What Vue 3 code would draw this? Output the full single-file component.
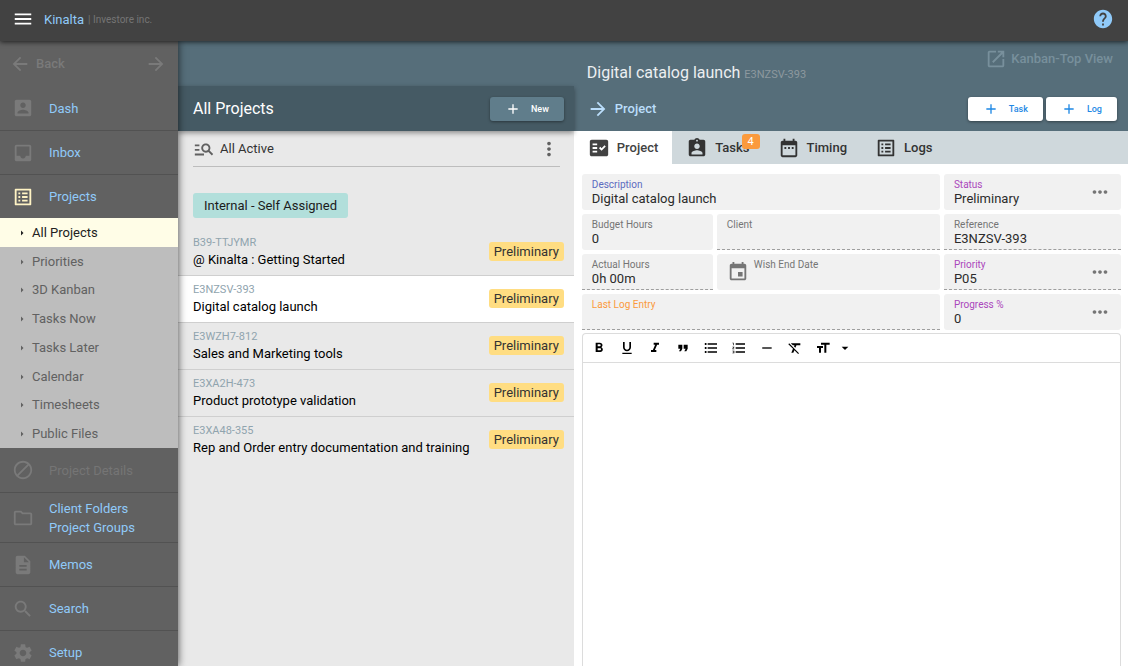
<script setup>
import { ref } from 'vue'

const icons = {
  menu: 'M3 18h18v-2H3v2zm0-5h18v-2H3v2zm0-7v2h18V6H3z',
  back: 'M20 11H7.83l5.59-5.59L12 4l-8 8 8 8 1.41-1.41L7.83 13H20v-2z',
  forward: 'M12 4l-1.41 1.41L16.17 11H4v2h12.17l-5.58 5.59L12 20l8-8z',
  dash: 'M3 5v14c0 1.1.89 2 2 2h14c1.1 0 2-.9 2-2V5c0-1.1-.9-2-2-2H5c-1.11 0-2 .9-2 2zm12 4c0 1.66-1.34 3-3 3s-3-1.34-3-3 1.34-3 3-3 3 1.34 3 3zm-9 8c0-2 4-3.1 6-3.1s6 1.1 6 3.1v1H6v-1z',
  inbox: 'M19 3H4.99c-1.11 0-1.98.89-1.98 2L3 19c0 1.1.88 2 1.99 2H19c1.1 0 2-.9 2-2V5c0-1.11-.9-2-2-2zm0 12h-4c0 1.66-1.35 3-3 3s-3-1.34-3-3H4.99V5H19v10z',
  list: 'M19 5v14H5V5h14m1.1-2H3.9c-.5 0-.9.4-.9.9v16.2c0 .4.4.9.9.9h16.2c.4 0 .9-.5.9-.9V3.9c0-.5-.5-.9-.9-.9zM11 7h6v2h-6V7zm0 4h6v2h-6v-2zm0 4h6v2h-6zM7 7h2v2H7zm0 4h2v2H7zm0 4h2v2H7z',
  block: 'M12 2C6.48 2 2 6.48 2 12s4.48 10 10 10 10-4.48 10-10S17.52 2 12 2zM4 12c0-4.42 3.58-8 8-8 1.85 0 3.55.63 4.9 1.69L5.69 16.9C4.63 15.55 4 13.85 4 12zm8 8c-1.85 0-3.55-.63-4.9-1.69L18.31 7.1C19.37 8.45 20 10.15 20 12c0 4.42-3.58 8-8 8z',
  folder: 'M9.17 6l2 2H20v10H4V6h5.17M10 4H4c-1.1 0-1.99.9-1.99 2L2 18c0 1.1.9 2 2 2h16c1.1 0 2-.9 2-2V8c0-1.1-.9-2-2-2h-8l-2-2z',
  memo: 'M14 2H6c-1.1 0-1.99.9-1.99 2L4 20c0 1.1.89 2 1.99 2H18c1.1 0 2-.9 2-2V8l-6-6zm2 16H8v-2h8v2zm0-4H8v-2h8v2zm-3-5V3.5L18.5 9H13z',
  search: 'M15.5 14h-.79l-.28-.27C15.41 12.59 16 11.11 16 9.5 16 5.91 13.09 3 9.5 3S3 5.91 3 9.5 5.91 16 9.5 16c1.61 0 3.09-.59 4.23-1.57l.27.28v.79l5 4.99L20.49 19l-4.99-5zm-6 0C7.01 14 5 11.99 5 9.5S7.01 5 9.5 5 14 7.01 14 9.5 11.99 14 9.5 14z',
  settings: 'M19.14 12.94c.04-.3.06-.61.06-.94 0-.32-.02-.64-.07-.94l2.03-1.58c.18-.14.23-.41.12-.61l-1.92-3.32c-.12-.22-.37-.29-.59-.22l-2.39.96c-.5-.38-1.03-.7-1.62-.94l-.36-2.54c-.04-.24-.24-.41-.48-.41h-3.84c-.24 0-.43.17-.47.41l-.36 2.54c-.59.24-1.13.57-1.62.94l-2.39-.96c-.22-.08-.47 0-.59.22L2.74 8.87c-.12.21-.08.47.12.61l2.03 1.58c-.05.3-.09.63-.09.94s.02.64.07.94l-2.03 1.58c-.18.14-.23.41-.12.61l1.92 3.32c.12.22.37.29.59.22l2.39-.96c.5.38 1.03.7 1.62.94l.36 2.54c.05.24.24.41.48.41h3.84c.24 0 .44-.17.47-.41l.36-2.54c.59-.24 1.13-.56 1.62-.94l2.39.96c.22.08.47 0 .59-.22l1.92-3.32c.12-.22.07-.47-.12-.61l-2.01-1.58zM12 15.6c-1.98 0-3.6-1.62-3.6-3.6s1.62-3.6 3.6-3.6 3.6 1.62 3.6 3.6-1.62 3.6-3.6 3.6z',
  help: 'M12 2C6.48 2 2 6.48 2 12s4.48 10 10 10 10-4.48 10-10S17.52 2 12 2zm1 17h-2v-2h2v2zm2.07-7.75l-.9.92C13.45 12.9 13 13.5 13 15h-2v-.5c0-1.1.45-2.1 1.17-2.83l1.24-1.26c.37-.36.59-.86.59-1.41 0-1.1-.9-2-2-2s-2 .9-2 2H8c0-2.21 1.79-4 4-4s4 1.79 4 4c0 .88-.36 1.68-.93 2.25z',
  open: 'M19 19H5V5h7V3H5c-1.11 0-2 .9-2 2v14c0 1.1.89 2 2 2h14c1.1 0 2-.9 2-2v-7h-2v7zM14 3v2h3.59l-9.83 9.83 1.41 1.41L19 6.41V10h2V3h-7z',
  add: 'M19 13h-6v6h-2v-6H5v-2h6V5h2v6h6v2z',
  filter: 'M7 9H2V7h5v2zm0 3H2v2h5v-2zm13.59 7l-3.83-3.83c-.8.52-1.74.83-2.76.83-2.76 0-5-2.24-5-5s2.24-5 5-5 5 2.24 5 5c0 1.02-.31 1.96-.83 2.75L22 17.59 20.59 19zM17 11c0-1.65-1.35-3-3-3s-3 1.35-3 3 1.35 3 3 3 3-1.35 3-3zM2 19h10v-2H2v2z',
  moreVert: 'M12 8c1.1 0 2-.9 2-2s-.9-2-2-2-2 .9-2 2 .9 2 2 2zm0 2c-1.1 0-2 .9-2 2s.9 2 2 2 2-.9 2-2-.9-2-2-2zm0 6c-1.1 0-2 .9-2 2s.9 2 2 2 2-.9 2-2-.9-2-2-2z',
  more: 'M6 10c-1.1 0-2 .9-2 2s.9 2 2 2 2-.9 2-2-.9-2-2-2zm12 0c-1.1 0-2 .9-2 2s.9 2 2 2 2-.9 2-2-.9-2-2-2zm-6 0c-1.1 0-2 .9-2 2s.9 2 2 2 2-.9 2-2-.9-2-2-2z',
  check: 'M20 3H4c-1.1 0-2 .9-2 2v14c0 1.1.9 2 2 2h16c1.1 0 2-.9 2-2V5c0-1.1-.9-2-2-2zM10 17H5v-2h5v2zm0-4H5v-2h5v2zm0-4H5V7h5v2zm4.82 6L12 12.16l1.41-1.41 1.41 1.42L17.99 9l1.42 1.42L14.82 15z',
  tasks: 'M19 3h-4.18C14.4 1.84 13.3 1 12 1c-1.3 0-2.4.84-2.82 2H5c-1.1 0-2 .9-2 2v14c0 1.1.9 2 2 2h14c1.1 0 2-.9 2-2V5c0-1.1-.9-2-2-2zm-7 0c.55 0 1 .45 1 1s-.45 1-1 1-1-.45-1-1 .45-1 1-1zm0 4c1.66 0 3 1.34 3 3s-1.34 3-3 3-3-1.34-3-3 1.34-3 3-3zm6 12H6v-1.4c0-2 4-3.1 6-3.1s6 1.1 6 3.1V19z',
  timing: 'M9 11H7v2h2v-2zm4 0h-2v2h2v-2zm4 0h-2v2h2v-2zm2-7h-1V2h-2v2H8V2H6v2H5c-1.11 0-1.99.9-1.99 2L3 20c0 1.1.89 2 2 2h14c1.1 0 2-.9 2-2V6c0-1.1-.9-2-2-2zm0 16H5V9h14v11z',
  event: 'M17 12h-5v5h5v-5zM16 1v2H8V1H6v2H5c-1.11 0-1.99.9-1.99 2L3 19c0 1.1.89 2 2 2h14c1.1 0 2-.9 2-2V5c0-1.1-.9-2-2-2h-1V1h-2zm3 18H5V8h14v11z',
  caret: 'M10 17l5-5-5-5v10z',
  bold: 'M15.6 10.79c.97-.67 1.65-1.77 1.65-2.79 0-2.26-1.75-4-4-4H7v14h7.04c2.09 0 3.71-1.7 3.71-3.79 0-1.52-.86-2.82-2.15-3.42zM10 6.5h3c.83 0 1.5.67 1.5 1.5s-.67 1.5-1.5 1.5h-3v-3zm3.5 9H10v-3h3.5c.83 0 1.5.67 1.5 1.5s-.67 1.5-1.5 1.5z',
  underline: 'M12 17c3.31 0 6-2.69 6-6V3h-2.5v8c0 1.93-1.57 3.5-3.5 3.5S8.5 12.93 8.5 11V3H6v8c0 3.31 2.69 6 6 6zm-7 2v2h14v-2H5z',
  italic: 'M10 4v3h2.21l-3.42 8H6v3h8v-3h-2.21l3.42-8H18V4z',
  quote: 'M6 17h3l2-4V7H5v6h3zm8 0h3l2-4V7h-6v6h3z',
  bullets: 'M4 10.5c-.83 0-1.5.67-1.5 1.5s.67 1.5 1.5 1.5 1.5-.67 1.5-1.5-.67-1.5-1.5-1.5zm0-6c-.83 0-1.5.67-1.5 1.5S3.17 7.5 4 7.5 5.5 6.83 5.5 6 4.83 4.5 4 4.5zm0 12c-.83 0-1.5.68-1.5 1.5s.68 1.5 1.5 1.5 1.5-.68 1.5-1.5-.67-1.5-1.5-1.5zM7 19h14v-2H7v2zm0-6h14v-2H7v2zm0-8v2h14V5H7z',
  numbers: 'M2 17h2v.5H3v1h1v.5H2v1h3v-4H2v1zm1-9h1V4H2v1h1v3zm-1 3h1.8L2 13.1v.9h3v-1H3.2L5 10.9V10H2v1zm5-6v2h14V5H7zm0 14h14v-2H7v2zm0-6h14v-2H7v2z',
  rule: 'M19 13H5v-2h14v2z',
  clear: 'M3.27 5L2 6.27l6.97 6.97L6.5 19h3l1.57-3.66L16.73 21 18 19.73 3.55 5.27 3.27 5zM6 5v.18L8.82 8h2.4l-.72 1.68 2.1 2.1L14.21 8H20V5H6z',
  size: 'M9 4v3h5v12h3V7h5V4H9zm-6 8h3v7h3v-7h3V9H3v3z',
  drop: 'M7 10l5 5 5-5z'
}

const topNav = [
  { label: 'Dash', icon: 'dash' },
  { label: 'Inbox', icon: 'inbox' },
  { label: 'Projects', icon: 'list', current: true }
]
const subNav = ['All Projects', 'Priorities', '3D Kanban', 'Tasks Now', 'Tasks Later', 'Calendar', 'Timesheets', 'Public Files']
const bottomNav = [
  { label: 'Project Details', icon: 'block', disabled: true },
  { label: 'Client Folders', second: 'Project Groups', icon: 'folder' },
  { label: 'Memos', icon: 'memo' },
  { label: 'Search', icon: 'search' },
  { label: 'Setup', icon: 'settings' }
]
const projects = [
  { code: 'B39-TTJYMR', name: '@ Kinalta : Getting Started' },
  { code: 'E3NZSV-393', name: 'Digital catalog launch' },
  { code: 'E3WZH7-812', name: 'Sales and Marketing tools' },
  { code: 'E3XA2H-473', name: 'Product prototype validation' },
  { code: 'E3XA48-355', name: 'Rep and Order entry documentation and training' }
]
const selected = ref('E3NZSV-393')
const tabs = [
  { label: 'Project', icon: 'check' },
  { label: 'Tasks', icon: 'tasks', badge: 4 },
  { label: 'Timing', icon: 'timing' },
  { label: 'Logs', icon: 'list' }
]
const activeTab = ref('Project')
const fields = ref([
  { id: 'description', label: 'Description', value: 'Digital catalog launch', tone: 'indigo', wide: true },
  { id: 'status', label: 'Status', value: 'Preliminary', tone: 'purple', more: true },
  { id: 'budget', label: 'Budget Hours', value: '0' },
  { id: 'client', label: 'Client', value: '', readonly: true },
  { id: 'reference', label: 'Reference', value: 'E3NZSV-393', readonly: true },
  { id: 'actual', label: 'Actual Hours', value: '0h 00m', readonly: true },
  { id: 'wish', label: 'Wish End Date', value: '', date: true },
  { id: 'priority', label: 'Priority', value: 'P05', tone: 'purple', more: true, readonly: true },
  { id: 'lastlog', label: 'Last Log Entry', value: '', tone: 'orange', wide: true, readonly: true },
  { id: 'progress', label: 'Progress %', value: '0', tone: 'purple', more: true }
])
const tools = [
  ['bold', 'Bold'], ['underline', 'Underline'], ['italic', 'Italic'], ['quote', 'Quote'],
  ['bullets', 'Bulleted list'], ['numbers', 'Numbered list'], ['rule', 'Horizontal rule'],
  ['clear', 'Clear formatting'], ['size', 'Text size']
]
const filter = ref('All Active')
const notes = ref('')
</script>

<template>
  <div class="app">
    <header class="topbar">
      <button class="icon-btn" aria-label="Menu"><svg class="i22" viewBox="0 0 24 24"><path :d="icons.menu" /></svg></button>
      <a href="#" class="brand">Kinalta</a>
      <span class="company">| Investore inc.</span>
      <button class="icon-btn help" aria-label="Help"><svg class="i22" viewBox="0 0 24 24"><path :d="icons.help" /></svg></button>
    </header>

    <div class="body">
      <nav class="sidebar">
        <div class="history">
          <button class="icon-btn back"><svg class="i22" viewBox="0 0 24 24"><path :d="icons.back" /></svg>Back</button>
          <button class="icon-btn" aria-label="Forward"><svg class="i22" viewBox="0 0 24 24"><path :d="icons.forward" /></svg></button>
        </div>
        <a v-for="n in topNav" :key="n.label" href="#" class="nav" :class="{ current: n.current }">
          <svg class="i22" viewBox="0 0 24 24"><path :d="icons[n.icon]" /></svg><span>{{ n.label }}</span>
        </a>
        <div class="subnav">
          <a v-for="(s, i) in subNav" :key="s" href="#" :class="{ on: i === 0 }">
            <svg class="i12" viewBox="0 0 24 24"><path :d="icons.caret" /></svg>{{ s }}
          </a>
        </div>
        <a v-for="n in bottomNav" :key="n.label" href="#" class="nav" :class="{ disabled: n.disabled, tall: n.second }">
          <svg class="i22" viewBox="0 0 24 24"><path :d="icons[n.icon]" /></svg>
          <span>{{ n.label }}<template v-if="n.second"><br>{{ n.second }}</template></span>
        </a>
      </nav>

      <section class="listing">
        <div class="band"></div>
        <div class="list-head">
          <h1>All Projects</h1>
          <button class="btn new"><svg class="i16" viewBox="0 0 24 24"><path :d="icons.add" /></svg>New</button>
        </div>
        <div class="list-body">
          <div class="filter">
            <svg class="i22" viewBox="0 0 24 24"><path :d="icons.filter" /></svg>
            <input v-model="filter" type="text" aria-label="Filter">
            <button class="icon-btn" aria-label="Filter options"><svg class="i22" viewBox="0 0 24 24"><path :d="icons.moreVert" /></svg></button>
          </div>
          <span class="group">Internal - Self Assigned</span>
          <ul>
            <li v-for="p in projects" :key="p.code">
              <button class="project" :class="{ on: selected === p.code }" @click="selected = p.code">
                <span class="text"><span class="code">{{ p.code }}</span><span class="name">{{ p.name }}</span></span>
                <span class="state">Preliminary</span>
              </button>
            </li>
          </ul>
        </div>
      </section>

      <main class="detail">
        <div class="detail-head">
          <div class="title-row">
            <h2>Digital catalog launch <small>E3NZSV-393</small></h2>
            <a href="#" class="kanban"><svg class="i22" viewBox="0 0 24 24"><path :d="icons.open" /></svg>Kanban-Top View</a>
          </div>
          <div class="action-row">
            <a href="#" class="crumb"><svg class="i22" viewBox="0 0 24 24"><path :d="icons.forward" /></svg>Project</a>
            <button class="btn"><svg class="i16" viewBox="0 0 24 24"><path :d="icons.add" /></svg>Task</button>
            <button class="btn"><svg class="i16" viewBox="0 0 24 24"><path :d="icons.add" /></svg>Log</button>
          </div>
        </div>
        <div class="tabs" role="tablist">
          <button v-for="t in tabs" :key="t.label" role="tab" :aria-selected="activeTab === t.label" :class="{ on: activeTab === t.label }" @click="activeTab = t.label">
            <svg class="i22" viewBox="0 0 24 24"><path :d="icons[t.icon]" /></svg>{{ t.label }}
            <span v-if="t.badge" class="badge">{{ t.badge }}</span>
          </button>
        </div>

        <div class="panel">
          <form class="fields" @submit.prevent>
            <div v-for="f in fields" :key="f.id" class="field" :class="{ wide: f.wide, readonly: f.readonly }">
              <button v-if="f.date" type="button" class="icon-btn" aria-label="Pick date"><svg class="i22" viewBox="0 0 24 24"><path :d="icons.event" /></svg></button>
              <div class="control">
                <label :for="f.id" :class="f.tone">{{ f.label }}</label>
                <input :id="f.id" v-model="f.value" type="text" :readonly="f.readonly">
              </div>
              <button v-if="f.more" type="button" class="icon-btn" :aria-label="f.label + ' options'"><svg class="i22" viewBox="0 0 24 24"><path :d="icons.more" /></svg></button>
            </div>
          </form>
          <div class="editor">
            <div class="toolbar">
              <button v-for="[k, name] in tools" :key="k" :aria-label="name"><svg class="i16" viewBox="0 0 24 24"><path :d="icons[k]" /></svg></button>
              <button class="narrow" aria-label="More sizes"><svg class="i16" viewBox="0 0 24 24"><path :d="icons.drop" /></svg></button>
            </div>
            <textarea v-model="notes" aria-label="Notes"></textarea>
          </div>
        </div>
      </main>
    </div>
  </div>
</template>

<style>
body { margin: 0; }
</style>

<style scoped>
.app { height: 100vh; display: flex; flex-direction: column; overflow: hidden; font: 13px/18px Roboto, "Liberation Sans", sans-serif; color: #1c1c1c; background: #fff; }
.app *, .app { box-sizing: border-box; }
a { text-decoration: none; color: inherit; }
button { font: inherit; color: inherit; border: 0; background: none; padding: 0; cursor: pointer; }
input, textarea { font: inherit; color: inherit; border: 0; background: none; padding: 0; outline: 0; min-width: 0; }
svg { fill: currentColor; flex: none; display: block; }
.i12 { width: 12px; height: 12px; }
.i16 { width: 16px; height: 16px; }
.i22 { width: 22px; height: 22px; }
.icon-btn { display: flex; align-items: center; }

.topbar { position: relative; z-index: 3; flex: none; height: 41px; padding: 0 14px 3px 12px; display: flex; align-items: center; background: #424242; box-shadow: 0 1px 5px rgba(0, 0, 0, .7); color: #fff; }
.brand { margin-left: 10px; padding-top: 1px; color: #90caf9; }
.company { margin-left: 4px; padding-top: 2px; font-size: 10px; color: #757575; }
.help { margin-left: auto; color: #90caf9; }

.body { flex: 1; min-height: 0; display: grid; grid-template-columns: 178px minmax(0, 5fr) minmax(0, 7fr); }

.sidebar { position: relative; z-index: 2; overflow: hidden; background: #616161; box-shadow: 0 0 8px rgba(0, 0, 0, .7); color: #90caf9; }
.history { height: 45px; padding: 0 11px 0 9px; display: flex; align-items: center; justify-content: space-between; color: #7a7a7a; font-weight: 500; }
.back { gap: 5px; }
.nav { height: 44px; padding: 0 12px; display: flex; align-items: center; gap: 15px; border-bottom: 1px solid #525252; line-height: 19px; }
.nav:nth-of-type(1) { height: 45px; }
.nav svg { color: #7a7a7a; }
.nav.tall { height: 50px; }
.nav.current { border-bottom: 0; height: 43px; }
.nav.current svg { color: #fff3c4; }
.nav.disabled { height: 45px; color: #757575; }
.subnav { height: 230px; display: grid; grid-template-rows: repeat(8, 1fr); background: #bdbdbd; color: #616161; }
.subnav a { display: flex; align-items: center; gap: 4px; padding: 1px 0 0 16px; }
.subnav .on { background: #fffde7; color: #212121; }

.listing { display: flex; flex-direction: column; background: #e9e9e9; }
.band { height: 45px; background: #566e7a; }
.list-head { position: relative; z-index: 1; height: 45px; padding: 1px 10px 0 15px; display: flex; align-items: center; justify-content: space-between; background: #455a64; color: #fff; box-shadow: 0 2px 5px rgba(0, 0, 0, .4); }
h1, h2 { margin: 0; font-size: 16px; line-height: 22px; font-weight: 400; }
.btn { height: 24px; padding: 0 15px; display: flex; align-items: center; gap: 10px; border-radius: 3px; background: #fff; color: #1e88e5; font-size: 9px; font-weight: 500; box-shadow: 0 1px 3px rgba(0, 0, 0, .4); }
.btn.new { background: #607d8b; color: #fff; }
.list-body { flex: 1; }
.filter { margin: 0 14px 0 15px; height: 36px; padding-top: 1px; display: flex; align-items: center; gap: 5px; border-bottom: 1px solid #bdbdbd; color: #616161; }
.filter input { flex: 1; color: #333; }
.group { display: inline-block; margin: 26px 0 11px 15px; padding: 0 11px; border-radius: 3px; background: #b2dfdb; line-height: 25px; }
ul { list-style: none; margin: 0; padding: 0; }
li + li { border-top: 1px solid #cfcfcf; }
.project { width: 100%; height: 46px; padding: 0 10px 0 15px; display: flex; align-items: center; justify-content: space-between; text-align: left; color: #000; }
.project.on { background: #fff; }
.text { display: flex; flex-direction: column; }
.code { font-size: 11px; line-height: 16px; color: #90a4ae; }
.state { margin-bottom: 2px; padding: 0 5px; border-radius: 3px; background: #ffdd82; line-height: 19px; color: #333; }

.detail { display: flex; flex-direction: column; background: #fff; }
.detail-head { height: 90px; padding: 0 11px 0 13px; background: #566e7a; color: #fff; }
.title-row { height: 45px; display: flex; justify-content: space-between; align-items: flex-end; }
small { font-size: 11px; color: #8d999f; }
h2 { color: #eceff1; }
.kanban { display: flex; align-items: center; align-self: flex-start; gap: 4px; padding: 7px 4px 0 0; color: #78909c; font-weight: 500; }
.action-row { height: 45px; display: flex; align-items: center; gap: 3px; }
.crumb { margin-right: auto; display: flex; align-items: center; gap: 6px; color: #bbdefb; font-weight: 500; }
.tabs { display: flex; height: 33px; background: #cfd8dc; }
.tabs button { position: relative; display: flex; align-items: center; gap: 7px; padding: 0 14px; font-weight: 500; color: #333; }
.tabs .on { background: #fff; color: #424242; }
.badge { position: absolute; top: 3px; right: 4px; width: 18px; border-radius: 3px; background: #fb9a3c; color: #fff; font-size: 11px; line-height: 15px; font-weight: 400; text-align: center; }

.panel { flex: 1; min-height: 0; padding: 10px 7px 0 8px; display: flex; flex-direction: column; gap: 3px; }
.fields { display: grid; grid-template-columns: minmax(0, 131fr) minmax(0, 223fr) minmax(0, 177fr); gap: 4px; }
.field { height: 36px; padding: 0 10px; display: flex; align-items: center; gap: 5px; border-radius: 3px; background: #f1f1f1; border-bottom: 1px solid transparent; color: #757575; }
.field.wide { grid-column: span 2; }
.field.readonly { border-bottom: 1px dashed #9e9e9e; border-radius: 3px 3px 0 0; }
.control { flex: 1; min-width: 0; display: flex; flex-direction: column; }
.control label { font-size: 10px; line-height: 12px; padding-top: 2px; }
.control input { width: 100%; height: 15px; color: #2b2b2b; }
.control .indigo { color: #5c6bc0; }
.control .purple { color: #ab47bc; }
.control .orange { color: #fb9a3c; }
.editor { flex: 1; min-height: 0; display: flex; flex-direction: column; border: 1px solid #dcdcdc; border-bottom: 0; border-radius: 4px 4px 0 0; }
.toolbar { height: 29px; display: flex; align-items: center; padding-left: 2px; border-bottom: 1px solid #dcdcdc; color: #000; }
.toolbar button { width: 28px; display: flex; justify-content: center; }
.toolbar .narrow { width: 16px; }
textarea { flex: 1; resize: none; padding: 10px; }
</style>
